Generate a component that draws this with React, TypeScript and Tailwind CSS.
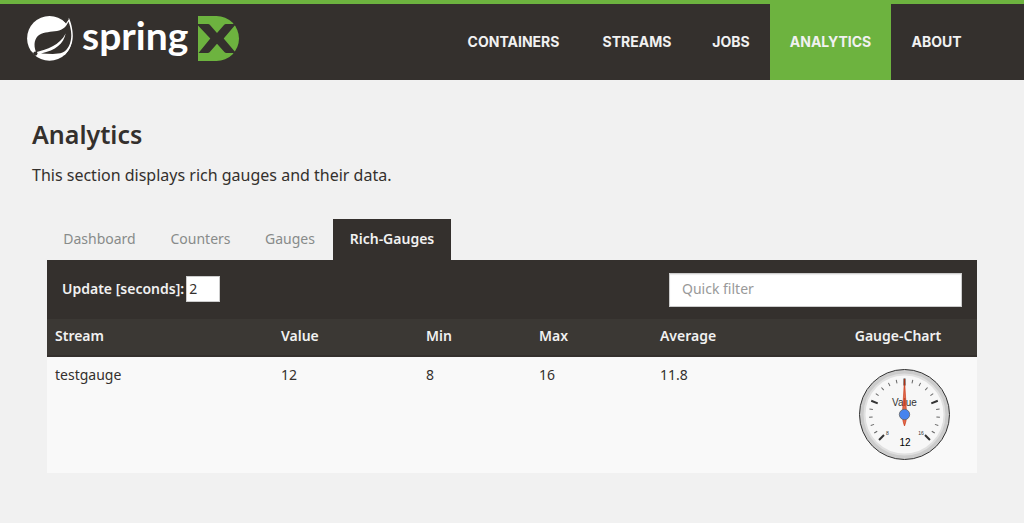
import { useState } from "react";

const navItems = [
  { label: "CONTAINERS", width: "w-[137px]" },
  { label: "STREAMS", width: "w-[110px]" },
  { label: "JOBS", width: "w-[78px]" },
  { label: "ANALYTICS", width: "w-[121px]" },
  { label: "ABOUT", width: "w-[91px]" },
];

const tabs = [
  { label: "Dashboard", width: "w-[105px]" },
  { label: "Counters", width: "w-[93px]" },
  { label: "Gauges", width: "w-[82px]" },
  { label: "Rich-Gauges", width: "w-[118px]" },
];

const columns = [
  { label: "Stream", width: "w-[24.3%]" },
  { label: "Value", width: "w-[15.6%]" },
  { label: "Min", width: "w-[12.15%]" },
  { label: "Max", width: "w-[13%]" },
  { label: "Average", width: "w-[20.95%]" },
  { label: "Gauge-Chart", width: "w-[14%]" },
];

const rows = [{ stream: "testgauge", value: 12, min: 8, max: 16, average: 11.8 }];

function Logo() {
  return (
    <a href="#home" aria-label="Spring XD" className="flex h-[46px] items-start text-white">
      <svg width="47" height="46" viewBox="0 0 47 46" aria-hidden="true">
        <circle cx="22.5" cy="22.4" r="22.4" fill="#fff" />
        <path
          d="M38.5 6.5C40 5 41.2 3.5 41.9 1.8C43.8 6 45.8 13 45.8 20C45.6 28 42.5 34.5 37.5 39.2L35 37Z"
          fill="#fff"
        />
        <path d="M36.5 4.5L39 7.6L41.6 3.4L41 0H37Z" fill="#34302d" />
        <path
          d="M41.4 5.5C39.5 10.5 36 13.8 30 15C24 16 17.5 15.8 12.5 18.8C7.5 22 6.2 28.5 9 36.2C20 33.5 32.5 29.5 38.7 17.5C36.5 27.5 29 34.5 14 37.4C22 37.8 30 38.6 35.5 36.6C41 34.2 44.3 27 44.3 19C44.2 14 43 9.5 41.4 5.5Z"
          fill="#34302d"
        />
        <circle cx="8.4" cy="37.6" r="2.1" fill="#34302d" />
        <path d="M4.2 35.6L7 38.4" stroke="#34302d" strokeWidth="0.8" />
      </svg>
      <span className="ml-2 w-[104px] font-['Lato',sans-serif] text-[39px] leading-[38px] font-bold whitespace-nowrap">
        spring
      </span>
      <svg width="42" height="46" viewBox="0 0 42 46" className="ml-3" aria-hidden="true">
        <path d="M0 0H18.5A22.5 22.5 0 0 1 18.5 45H0Z" fill="#6db33f" />
        <path
          d="M0 8H10Q11.3 8 12 9L19 17L26 9Q26.8 8 28 8H38L25.7 22.4L38 37H28.2Q27.3 37 26.6 36.2L19 27.7L11.6 36.2Q10.8 37 9.8 37H0.5L12.3 22.4L0 9.5Z"
          fill="#34302d"
        />
      </svg>
    </a>
  );
}

function Gauge({ value, min, max }: { value: number; min: number; max: number }) {
  const angle = ((value - min) / (max - min)) * 270 - 135;
  return (
    <svg
      width="100"
      height="100"
      viewBox="0 0 100 100"
      role="img"
      aria-label={`Value ${value}`}
      className="block font-['Liberation_Sans',sans-serif]"
    >
      <circle cx="49.5" cy="49.5" r="45" fill="#ccc" stroke="#333" strokeWidth="1" />
      <circle cx="49.5" cy="49.5" r="40" fill="#f7f7f7" stroke="#e0e0e0" strokeWidth="2" />
      {Array.from({ length: 21 }, (_, i) => {
        const major = i % 5 === 0;
        return (
          <line
            key={i}
            x1="49.5"
            x2="49.5"
            y1={major ? 13.5 : 14}
            y2={major ? 20.5 : 17.5}
            stroke={major ? "#333" : "#666"}
            strokeWidth={major ? 2 : 1}
            transform={`rotate(${i * 13.5 - 135} 49.5 49.5)`}
          />
        );
      })}
      <text x="49.5" y="41" textAnchor="middle" fontSize="10" fill="#333">
        Value
      </text>
      <text x="32.5" y="70" textAnchor="middle" fontSize="5" fill="#333">
        {min}
      </text>
      <text x="66" y="70" textAnchor="middle" fontSize="5" fill="#333">
        {max}
      </text>
      <text x="50" y="81" textAnchor="middle" fontSize="10" fill="#000">
        {value}
      </text>
      <path
        d="M49.5 14L51.6 49.5Q51.4 57 49.5 61Q47.6 57 47.4 49.5Z"
        fill="#dc3912"
        fillOpacity="0.75"
        stroke="#c63310"
        strokeWidth="0.6"
        transform={`rotate(${angle} 49.5 49.5)`}
      />
      <circle cx="49.5" cy="49.5" r="5.2" fill="#4684ee" stroke="#666" strokeWidth="0.8" />
    </svg>
  );
}

export default function App() {
  const [active, setActive] = useState("Rich-Gauges");
  const [seconds, setSeconds] = useState("2");
  const [filter, setFilter] = useState("");
  const shown = rows.filter((row) => row.stream.includes(filter));

  return (
    <div className="min-h-screen bg-[#f1f1f1] font-['Noto_Sans',sans-serif] text-[14px] leading-5 text-[#34302d]">
      <header className="flex h-20 justify-between border-t-4 border-[#6db33f] bg-[#34302d] pr-[42px] pl-[27px]">
        <div className="pt-3">
          <Logo />
        </div>
        <nav className="flex font-['Inter',sans-serif] text-[14px] font-bold text-[#f1f1f1]">
          {navItems.map(({ label, width }) => (
            <a
              key={label}
              href={`#${label.toLowerCase()}`}
              className={`flex items-center justify-center ${width} ${label === "ANALYTICS" ? "bg-[#6db33f]" : ""}`}
            >
              {label}
            </a>
          ))}
        </nav>
      </header>

      <main className="px-8 pt-10">
        <h1 className="text-[25px] leading-7 font-semibold">Analytics</h1>
        <p className="mt-[15px] text-[16px] leading-6">This section displays rich gauges and their data.</p>

        <section className="mx-[15px] mt-8">
          <div role="tablist" className="flex gap-[2px]">
            {tabs.map(({ label, width }) => (
              <button
                key={label}
                type="button"
                role="tab"
                aria-selected={label === active}
                onClick={() => setActive(label)}
                className={`h-[41px] pb-[2px] text-center ${width} ${
                  label === active ? "bg-[#34302d] font-semibold text-[#f1f1f1]" : "text-[#888b8a]"
                }`}
              >
                {label}
              </button>
            ))}
          </div>

          <div className="flex h-[59px] items-start justify-between bg-[#34302d] px-[15px] pt-[13px]">
            <div className="flex items-center gap-[2px] pt-[3px]">
              <label htmlFor="update" className="font-semibold text-[#f1f1f1]">
                Update [seconds]:
              </label>
              <input
                id="update"
                value={seconds}
                onChange={(event) => setSeconds(event.target.value)}
                className="h-[26px] w-[34px] border border-[#ccc] bg-white px-[2px] pb-[2px]"
              />
            </div>
            <input
              aria-label="Quick filter"
              placeholder="Quick filter"
              value={filter}
              onChange={(event) => setFilter(event.target.value)}
              className="h-[34px] w-[293px] border border-[#ccc] bg-white px-3 pb-[3px] shadow-[inset_0_1px_1px_rgba(0,0,0,0.08)] placeholder:text-[#999]"
            />
          </div>

          <table className="w-full table-fixed border-collapse text-left">
            <thead>
              <tr className="h-[37px] border-b-2 border-[#34302d] bg-[#3b3834] text-[#f1f1f1]">
                {columns.map(({ label, width }) => (
                  <th key={label} className={`px-2 pb-[2px] font-semibold ${width}`}>
                    {label}
                  </th>
                ))}
              </tr>
            </thead>
            <tbody>
              {shown.map((row) => (
                <tr key={row.stream} className="bg-[#f9f9f9] align-top">
                  <td className="p-2">{row.stream}</td>
                  <td className="p-2">{row.value}</td>
                  <td className="p-2">{row.min}</td>
                  <td className="p-2">{row.max}</td>
                  <td className="p-2">{row.average}</td>
                  <td className="p-2">
                    <Gauge value={row.value} min={row.min} max={row.max} />
                  </td>
                </tr>
              ))}
            </tbody>
          </table>
        </section>
      </main>
    </div>
  );
}
